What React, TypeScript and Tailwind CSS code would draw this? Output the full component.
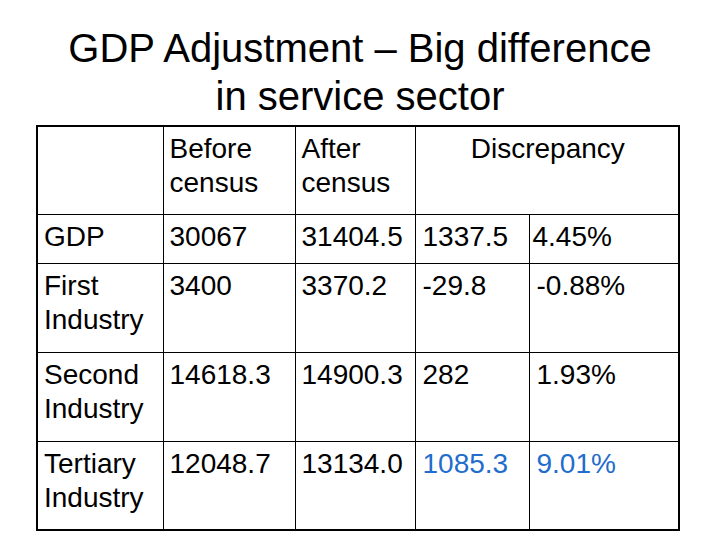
export default function App() {
  const rows = [
    { label: ['GDP'], before: '30067', after: '31404.5', diff: '1337.5', pct: '4.45%', blue: false, tall: false },
    { label: ['First', 'Industry'], before: '3400', after: '3370.2', diff: '-29.8', pct: '-0.88%', blue: false, tall: true },
    { label: ['Second', 'Industry'], before: '14618.3', after: '14900.3', diff: '282', pct: '1.93%', blue: false, tall: true },
    { label: ['Tertiary', 'Industry'], before: '12048.7', after: '13134.0', diff: '1085.3', pct: '9.01%', blue: true, tall: true },
  ]

  const cell = 'border border-black align-top pl-[6px] pr-1 pt-[5px]'

  return (
    <div className="w-[720px] h-[540px] bg-white text-black font-['Liberation_Sans',Arial,sans-serif] overflow-hidden">
      <h1 className="pt-[24px] text-center text-[40px] leading-[48px]">
        GDP Adjustment – Big difference
        <br />
        in service sector
      </h1>
      <table className="mt-[5px] ml-[36px] w-[642px] table-fixed border-collapse border-2 border-black text-[28px] leading-[34px]">
        <colgroup>
          <col className="w-[126px]" />
          <col className="w-[132px]" />
          <col className="w-[120px]" />
          <col className="w-[114px]" />
          <col className="w-[150px]" />
        </colgroup>
        <tbody>
          <tr className="h-[88px]">
            <td className={`${cell} border-l-2 border-t-2`}></td>
            <td className={`${cell} border-t-2`}>
              Before
              <br />
              census
            </td>
            <td className={`${cell} border-t-2`}>
              After
              <br />
              census
            </td>
            <td colSpan={2} className={`${cell} border-t-2 border-r-2 text-center`}>
              Discrepancy
            </td>
          </tr>
          {rows.map((r, i) => {
            const last = i === rows.length - 1 ? 'border-b-2' : ''
            const color = r.blue ? 'text-[#1f6dcc]' : ''
            return (
              <tr key={i} className={r.tall ? 'h-[89px]' : 'h-[49px]'}>
                <td className={`${cell} border-l-2 ${last}`}>
                  {r.label.map((l, j) => (
                    <div key={j}>{l}</div>
                  ))}
                </td>
                <td className={`${cell} ${last}`}>{r.before}</td>
                <td className={`${cell} ${last}`}>{r.after}</td>
                <td className={`${cell} !pl-[7px] ${color} ${last}`}>{r.diff}</td>
                <td className={`${cell} border-r-2 ${i === 0 ? '!pl-[3px]' : '!pl-[7px]'} ${color} ${last}`}>
                  {r.pct}
                </td>
              </tr>
            )
          })}
        </tbody>
      </table>
    </div>
  )
}
